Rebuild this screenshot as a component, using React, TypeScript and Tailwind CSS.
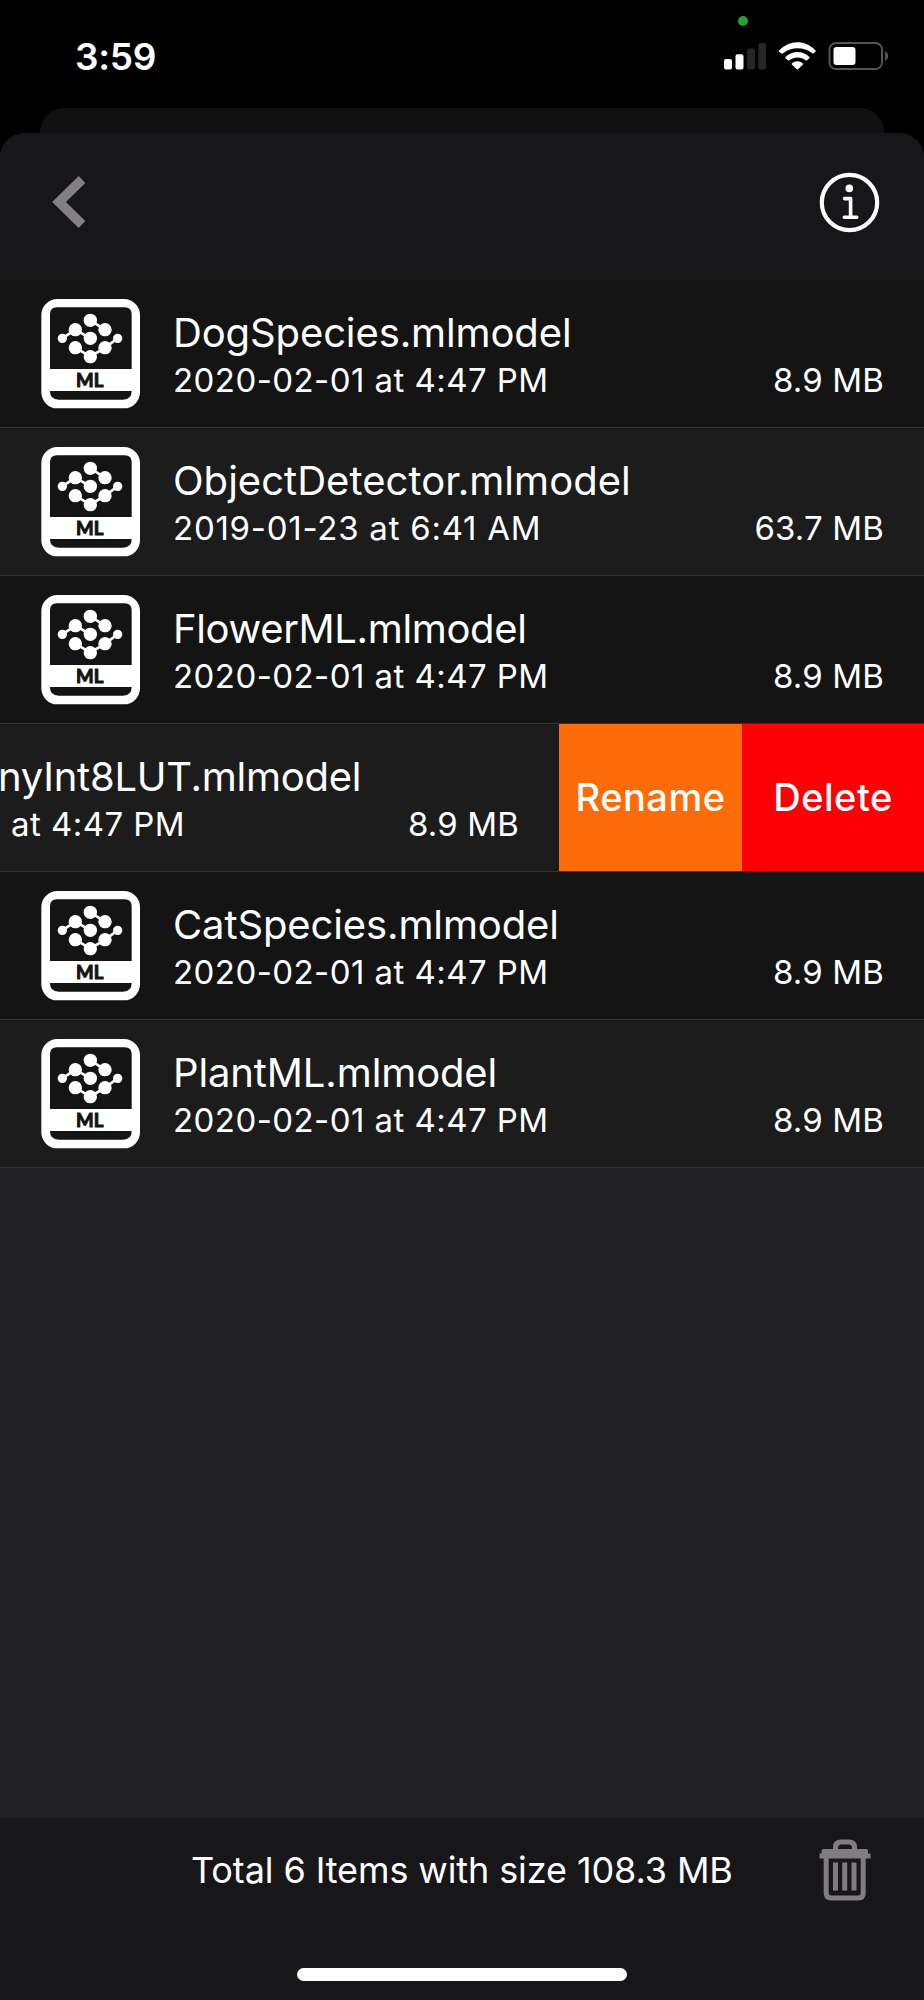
type ModelFile = {
  name: string;
  date: string;
  size: string;
  swiped?: boolean;
  nameTracking?: string;
  dateTracking?: string;
};

const files: ModelFile[] = [
  { name: "DogSpecies.mlmodel", date: "2020-02-01 at 4:47 PM", size: "8.9 MB" },
  {
    name: "ObjectDetector.mlmodel",
    date: "2019-01-23 at 6:41 AM",
    size: "63.7 MB",
    nameTracking: "tracking-[0.03px]",
    dateTracking: "tracking-[0.75px]",
  },
  { name: "FlowerML.mlmodel", date: "2020-02-01 at 4:47 PM", size: "8.9 MB", nameTracking: "tracking-[-0.35px]" },
  { name: "nyInt8LUT.mlmodel", date: "at 4:47 PM", size: "8.9 MB", swiped: true, nameTracking: "tracking-[-0.25px]" },
  { name: "CatSpecies.mlmodel", date: "2020-02-01 at 4:47 PM", size: "8.9 MB" },
  { name: "PlantML.mlmodel", date: "2020-02-01 at 4:47 PM", size: "8.9 MB" },
];

function StatusBar() {
  return (
    <div className="relative flex h-[108px] items-start justify-between pl-[75px] pr-[35px] pt-[33px]">
      <span className="pt-px text-[37px] leading-[46px] font-semibold tracking-[-0.3px]">3:59</span>
      <span className="absolute left-[738px] top-[16px] h-[10px] w-[10px] rounded-full bg-[#2b9c3a]" />
      <div className="flex pt-[9px]">
        <svg width="42" height="28" viewBox="0 0 42 28">
          <rect x="0" y="17" width="8" height="10.5" rx="2" fill="#fff" />
          <rect x="11.5" y="12.3" width="8" height="15.2" rx="2" fill="#fff" />
          <rect x="23" y="6.5" width="8" height="21" rx="2" fill="#262626" />
          <rect x="34.3" y="1" width="7.7" height="26.5" rx="2" fill="#262626" />
        </svg>
        <svg width="38" height="28" viewBox="0 0 38 28" className="ml-[12px]" fill="#fff">
          <path d="M1.2 8.3 Q0.4 9.2 1.2 10 L3.6 11.5 Q4.4 11.9 5.1 11.2 C13.4 4.6 25.9 4.6 34.2 11.2 Q34.9 11.9 35.6 11.3 L37.6 9.6 Q38 9 37.4 8.2 C26.5 -2.4 12 -2.4 1.2 8.3Z" />
          <path d="M7.5 15 Q6.9 15.6 7.6 16.3 L10.1 18.4 Q10.8 18.8 11.5 18.2 C16.3 14.5 23 14.5 27.6 18.2 Q28.3 18.8 29 18.3 L31.4 16.2 Q32 15.6 31.4 14.9 C24.5 8.5 14.6 8.5 7.5 15Z" />
          <path d="M13.9 21.6 Q13.4 22.2 14 22.8 L18.5 27 Q19.4 27.8 20.2 27 L24.8 22.8 Q25.3 22.2 24.8 21.6 C21.8 18.6 16.9 18.6 13.9 21.6Z" />
        </svg>
        <svg width="61" height="28" viewBox="0 0 61 28" className="ml-[12px]">
          <rect x="1.5" y="1" width="52.5" height="26" rx="6.5" fill="none" stroke="#545454" strokeWidth="2" />
          <rect x="5.5" y="5" width="22" height="18" rx="3" fill="#fff" />
          <path d="M57 9.3 C61.3 11 61.3 17 57 18.7Z" fill="#545454" />
        </svg>
      </div>
    </div>
  );
}

function ModelIcon() {
  return (
    <svg width="99" height="110" viewBox="33 42 297 330" className="shrink-0">
      <rect x="34" y="42" width="296" height="328" rx="48" fill="#fff" />
      <path d="M60 252 V88 Q60 67 81 67 H284 Q305 67 305 88 V252Z" fill="#141414" />
      <path d="M60 318 H305 Q305 344 279 344 H86 Q60 344 60 318Z" fill="#141414" />
      <g stroke="#fff" strokeWidth="8" fill="none">
        <path d="M97 160 L136 134 L181 160" />
        <path d="M181 106 L225 134" />
        <path d="M136 188 L181 215 L225 188 L263 160" />
      </g>
      <g fill="#fff">
        <circle cx="97" cy="160" r="14" />
        <circle cx="263" cy="160" r="14" />
        <circle cx="136" cy="134" r="20" />
        <circle cx="181" cy="106" r="20" />
        <circle cx="225" cy="134" r="20" />
        <circle cx="181" cy="160" r="20" />
        <circle cx="136" cy="188" r="20" />
        <circle cx="225" cy="188" r="20" />
        <circle cx="181" cy="215" r="20" />
      </g>
      <text
        x="179"
        y="306"
        textAnchor="middle"
        fontSize="56"
        fill="#141414"
        stroke="#141414"
        strokeWidth="3"
        strokeLinejoin="round"
        className="font-['Lato',sans-serif] font-bold"
      >
        ML
      </text>
    </svg>
  );
}

function FileRow({ file }: { file: ModelFile }) {
  return (
    <li className="flex h-[148px] border-b border-[#343436] odd:bg-[#141414] even:bg-[#1c1c1c]">
      <div className={`flex flex-1 pr-[40px] ${file.swiped ? "-ml-[2px]" : "pl-[41px]"}`}>
        {!file.swiped && (
          <div className="mr-[33px] pt-[19px]">
            <ModelIcon />
          </div>
        )}
        <div className="flex-1 pt-[30px]">
          <p className={`text-[40px] leading-[46px] whitespace-nowrap ${file.nameTracking || "tracking-[-0.12px]"}`}>
            {file.name}
          </p>
          <div className={`flex justify-between pt-px text-[33px] leading-[46px] ${file.swiped ? "pl-[13px]" : ""}`}>
            <span className={file.dateTracking || "tracking-[0.44px]"}>{file.date}</span>
            <span className="tracking-[0.15px]">{file.size}</span>
          </div>
        </div>
      </div>
      {file.swiped && (
        <div className="flex text-[38px] font-medium tracking-[0.5px]">
          <button className="h-[147px] w-[183px] bg-[#fd6c08]">Rename</button>
          <button className="h-[147px] w-[182px] bg-[#fd0006]">Delete</button>
        </div>
      )}
    </li>
  );
}

export default function App() {
  return (
    <div className="flex h-[2000px] w-[924px] flex-col overflow-hidden bg-black font-['Inter',sans-serif] text-white">
      <StatusBar />
      <div className="mx-[40px] h-[25px] rounded-t-[24px] bg-[#111111]" />

      <div className="flex flex-1 flex-col overflow-hidden rounded-t-[25px] bg-[#222224]">
        <header className="flex h-[147px] justify-between bg-[#171719] pl-[52px] pr-[44px]">
          <svg width="34" height="54" viewBox="0 0 34 54" className="mt-[42px]">
            <path d="M30 4.5 L7 27 L30 49.5" fill="none" stroke="#838083" strokeWidth="9.5" />
          </svg>
          <svg width="61" height="61" viewBox="0 0 61 61" className="mt-[38.5px]" fill="none" stroke="#fff">
            <circle cx="30.5" cy="30.5" r="27.7" strokeWidth="4.2" />
            <circle cx="30.3" cy="16.4" r="3.8" fill="#fff" stroke="none" />
            <path d="M25.6 26.6 H31.6 V45 M25.3 45.2 H37.8" strokeWidth="3.6" strokeLinecap="round" strokeLinejoin="round" />
          </svg>
        </header>

        <ul>
          {files.map((file) => (
            <FileRow key={file.name} file={file} />
          ))}
        </ul>

        <footer className="mt-auto flex h-[182px] flex-col items-center bg-[#171719]">
          <div className="flex h-[104px] w-full items-center justify-between pl-[191px] pr-[53px]">
            <p className="text-[36px] tracking-[-0.1px]">Total 6 Items with size 108.3 MB</p>
            <svg width="52" height="62" viewBox="0 0 52 62" fill="#807d80">
              <path d="M14 11 V8 Q14 0.5 22 0.5 H30 Q38 0.5 38 8 V11 H33 V9 Q33 5.5 29.5 5.5 H22.5 Q19 5.5 19 9 V11Z" />
              <path d="M4.5 10 H47.5 Q49 10 49 12 V14.5 H51.5 V19.5 H0.5 V14.5 H2.5 V12 Q2.5 10 4.5 10Z" />
              <path d="M7.2 18 V54 Q7.2 59 12.2 59 H39.2 Q44.2 59 44.2 54 V18" fill="none" stroke="#807d80" strokeWidth="5" />
              <rect x="14" y="23.5" width="5" height="28" />
              <rect x="23.2" y="23.5" width="5" height="28" />
              <rect x="32.5" y="23.5" width="5" height="28" />
            </svg>
          </div>
          <div className="mt-[46px] h-[13px] w-[330px] rounded-full bg-white" />
        </footer>
      </div>
    </div>
  );
}
